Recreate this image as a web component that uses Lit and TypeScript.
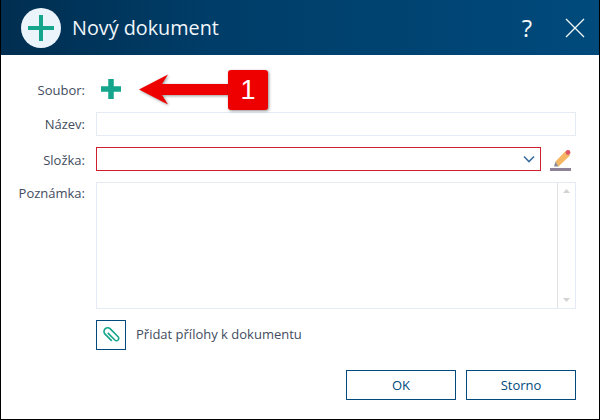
import { LitElement, html, css } from "lit";
import { customElement } from "lit/decorators.js";

@customElement("app-root")
export class AppRoot extends LitElement {
  static styles = css`
    :host { display: block; width: 600px; height: 420px; font-family: "Open Sans", sans-serif; color: #424c5e; }
    .dialog { position: relative; box-sizing: border-box; width: 600px; height: 420px; background: #fff; border: solid #000; border-width: 0 1px 1px 1px; display: flex; flex-direction: column; overflow: hidden; }
    .head { height: 55px; flex: none; margin: 0 -1px; background: linear-gradient(90deg, #002e50 0%, #003d68 35%, #004a7c 100%); display: flex; align-items: center; padding: 0 15px 0 21px; color: #fff; }
    .logo { width: 40px; height: 40px; border-radius: 50%; background: #eaf4fa; display: flex; align-items: center; justify-content: center; flex: none; }
    .title { font-size: 19.8px; margin-left: 11px; flex: 1; color: #f0f6fa; }
    .help { font-size: 24px; width: 24px; text-align: center; margin-right: 26px; color: #f2f6f9; }
    .form { flex: 1; padding: 20px 23px 0 0; display: flex; flex-direction: column; }
    .row { display: grid; grid-template-columns: 84px 1fr; column-gap: 11px; font-size: 13px; }
    .label { text-align: right; }
    .r1 { height: 28px; align-items: center; }
    .r1 .label { padding-top: 2px; }
    .r1 svg { display: block; margin-left: 5px; }
    .r2 { margin-top: 9px; height: 24px; align-items: center; }
    .input { box-sizing: border-box; height: 24px; border: 1px solid #e5eaf4; }
    .r3 { margin-top: 11px; height: 25px; grid-template-columns: 84px 1fr 24px; align-items: center; }
    .select { box-sizing: border-box; height: 24px; align-self: start; border: 1px solid #d01f2e; display: flex; align-items: center; justify-content: flex-end; padding-right: 5px; }
    .pen { display: block; margin-left: -2px; }
    .r4 { margin-top: 10px; height: 127px; }
    .r4 .label { padding-top: 2px; }
    .area { box-sizing: border-box; height: 127px; border: 1px solid #e5eaf4; display: flex; justify-content: flex-end; }
    .scroll { width: 18px; border-left: 1px solid #dfe1e4; display: flex; flex-direction: column; justify-content: space-between; align-items: center; padding: 6px 0; box-sizing: border-box; }
    .r5 { margin-top: 11px; height: 30px; align-items: center; }
    .attach { display: flex; align-items: center; gap: 10px; font-size: 13px; }
    .attach span { padding-bottom: 2px; }
    .iconbtn { box-sizing: border-box; width: 30px; height: 30px; border: 1px solid #004a7c; display: flex; align-items: center; justify-content: center; }
    .actions { margin-top: 20px; display: flex; justify-content: flex-end; gap: 10px; }
    .btn { box-sizing: border-box; width: 110px; height: 30px; border: 1px solid #004a7c; color: #004a7c; background: #fff; font: 13px "Open Sans", sans-serif; padding: 0; }
    .callout { position: absolute; left: 137px; top: 70px; display: flex; align-items: center; }
    .badge { width: 40px; height: 40px; background: #ee0000; border-radius: 3px; color: #fff; font: 27px "Liberation Sans", sans-serif; display: flex; align-items: center; justify-content: center; box-shadow: 1px 1px 3px rgba(0,0,0,.45); margin-left: -2px; position: relative; }
    .arrow { display: block; filter: drop-shadow(1px 1px 1.5px rgba(0,0,0,.4)); }
  `;

  render() {
    return html`<div class="dialog">
      <div class="head">
        <div class="logo"><svg width="26" height="26" viewBox="0 0 26 26"><path d="M13 0v26M0 13h26" stroke="#14a58c" stroke-width="4"/></svg></div>
        <div class="title">Nový dokument</div>
        <div class="help">?</div>
        <svg width="20" height="20" viewBox="0 0 20 20"><path d="M1 1l18 18M19 1L1 19" stroke="#f2f6f9" stroke-width="1.3" fill="none"/></svg>
      </div>
      <div class="form">
        <div class="row r1"><div class="label">Soubor:</div>
          <svg width="20" height="20" viewBox="0 0 20 20"><path d="M10 0v20M0 10h20" stroke="#14a58c" stroke-width="5.500"/></svg>
        </div>
        <div class="row r2"><div class="label">Název:</div><div class="input"></div></div>
        <div class="row r3"><div class="label">Složka:</div>
          <div class="select"><svg width="12" height="8" viewBox="0 0 12 8"><path d="M1 1.500l5 5 5-5" stroke="#3d6f9e" stroke-width="1.600" fill="none"/></svg></div>
          <svg class="pen" width="22" height="25" viewBox="0 0 22 25">
            <path d="M5.500 14.500L15.500 4 20 8.500 8.500 19.500z" fill="#f6b765"/>
            <circle cx="18" cy="5.500" r="2.400" fill="#dd5566"/>
            <path d="M5.500 14.500l3 5-4.500 0z" fill="#8a8a90"/>
            <rect x="0" y="21" width="21" height="3" fill="#8d8297"/>
          </svg>
        </div>
        <div class="row r4"><div class="label">Poznámka:</div>
          <div class="area"><div class="scroll">
            <svg width="7" height="4" viewBox="0 0 7 4"><path d="M3.500 0L7 4H0z" fill="#d3d3d3"/></svg>
            <svg width="7" height="4" viewBox="0 0 7 4"><path d="M0 0h7L3.500 4z" fill="#d3d3d3"/></svg>
          </div></div>
        </div>
        <div class="row r5"><div></div>
          <div class="attach">
            <div class="iconbtn"><svg width="22" height="22" viewBox="-11 -11 22 22"><g transform="translate(.5 .5) rotate(-45)"><path d="M-.8 -4.500V5.500A2.300 2.300 0 0 0 3.800 5.500V-5.500A3.700 3.700 0 0 0-3.600 -5.500V4" stroke="#14a58c" stroke-width="1.600" fill="none"/></g></svg></div>
            <span>Přidat přílohy k dokumentu</span>
          </div>
        </div>
        <div class="actions"><button class="btn">OK</button><button class="btn">Storno</button></div>
      </div>
      <div class="callout">
        <svg class="arrow" width="92" height="40" viewBox="0 0 92 40"><path d="M1 19.500L30 4.500 24 14H92v11H24l6 9.500z" fill="#ee0000"/></svg>
        <div class="badge">1</div>
      </div>
    </div>`;
  }
}
